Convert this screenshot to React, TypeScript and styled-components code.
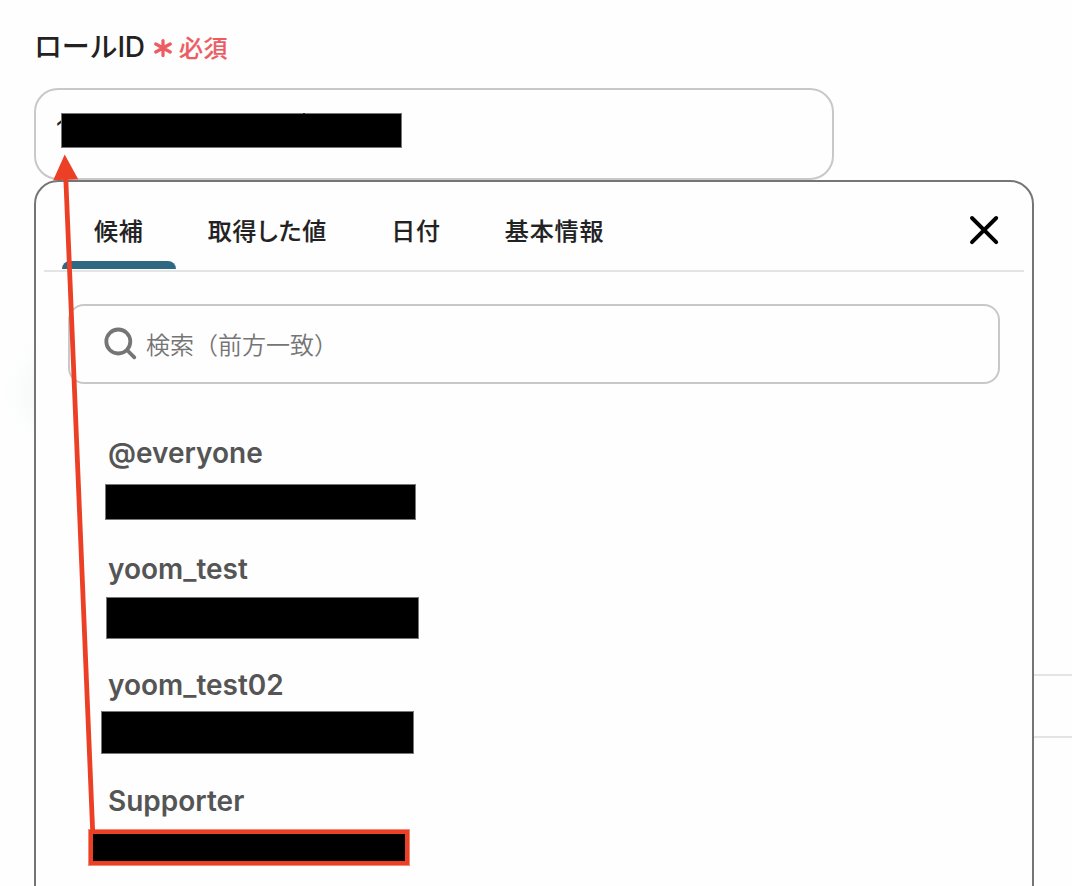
import React from 'react';
import styled, { createGlobalStyle } from 'styled-components';

const GlobalStyle = createGlobalStyle`
  * {
    box-sizing: border-box;
  }
  body {
    margin: 0;
    background: #fefefe;
    font-family: Inter, "Noto Sans CJK JP", sans-serif;
    color: #222;
  }
`;

const Page = styled.main`
  position: relative;
  height: 886px;
  padding: 27px 0 0 34px;
  overflow: hidden;
`;

const Label = styled.div`
  display: flex;
  align-items: center;
  height: 40px;
  margin-bottom: 21px;
  white-space: nowrap;
`;

const LabelText = styled.span`
  width: 119px;
  font: 500 28px/40px Inter, "Noto Sans CJK JP", sans-serif;
  letter-spacing: -0.2px;
`;

const Required = styled.span`
  display: flex;
  align-items: center;
  gap: 6px;
  color: #ec5c62;
  font: 500 24px/38px "Noto Sans CJK JP", sans-serif;
  letter-spacing: 0.5px;
  -webkit-text-stroke: 0.15px currentColor;
`;

const Field = styled.div`
  display: flex;
  align-items: flex-start;
  width: 800px;
  height: 92px;
  padding: 23px 20px;
  border: 2px solid #c8c8c8;
  border-radius: 24px;
  font-size: 27px;
  line-height: 35px;
`;

const FieldValue = styled.span`
  width: 5px;
  white-space: nowrap;
`;

const Mask = styled.div<{ $width: number; $height: number; $top?: number; $left?: number }>`
  position: relative;
  flex: none;
  width: ${({ $width }) => $width}px;
  height: ${({ $height }) => $height}px;
  margin-top: ${({ $top = 0 }) => $top}px;
  margin-left: ${({ $left = 0 }) => $left}px;
  border: 1px solid #777;
  background: #000;
`;

const OutlinedMask = styled(Mask)`
  border-color: #f28a78;
  box-shadow: inset 0 0 0 4px #ec4026;
`;

const Panel = styled.section`
  position: relative;
  width: 1000px;
  height: 760px;
  border: 2px solid #757575;
  border-radius: 24px;
  background: #fefefe;
`;

const PanelHeader = styled.div`
  display: flex;
  align-items: flex-start;
  justify-content: space-between;
  height: 90px;
  margin: 0 8px;
  padding: 0 23px 0 18px;
  border-bottom: 2px solid #e4e4e4;
`;

const Tabs = styled.nav`
  display: flex;
`;

const Tab = styled.button<{ $active?: boolean }>`
  display: flex;
  flex-direction: column;
  justify-content: space-between;
  height: 87px;
  padding: 0;
  border: 0;
  background: none;
  color: #222;
  font: 500 24px/36px "Noto Sans CJK JP", sans-serif;
  font-feature-settings: "palt";
  letter-spacing: 0.85px;
  white-space: nowrap;
  -webkit-text-stroke: 0.15px currentColor;

  span {
    padding: 30px 32px 0;
  }

  &::after {
    content: "";
    width: 100%;
    height: 8px;
    border-radius: 8px 8px 0 0;
    background: ${({ $active }) => ($active ? '#2e6881' : 'transparent')};
  }
`;

const CloseButton = styled.button`
  display: flex;
  margin-top: 31px;
  padding: 0;
  border: 0;
  background: none;
`;

const SearchBox = styled.div`
  display: flex;
  align-items: center;
  gap: 9px;
  height: 80px;
  margin: 32px 32px 43px;
  padding: 0 33px;
  border: 2px solid #c8c8c8;
  border-radius: 16px;
  color: #757575;
  font: 350 24px/36px "Noto Sans CJK JP", sans-serif;
`;

const Item = styled.div`
  height: 116px;
`;

const ItemName = styled.div`
  height: 52px;
  padding-left: 72px;
  color: #555;
  font-size: 28px;
  font-weight: 600;
  line-height: 52px;
`;

const Arrow = styled.svg`
  position: absolute;
  top: 0;
  left: 0;
  pointer-events: none;
`;

const Glow = styled.div`
  position: absolute;
  top: 322px;
  left: 0;
  width: 140px;
  height: 140px;
  border-radius: 50%;
  background: radial-gradient(closest-side, #f3f5f4 30%, #f8faf9 55%, #fcfdfd 80%, #fefefe 100%);
`;

const BackgroundRow = styled.div`
  position: absolute;
  top: 674px;
  left: 1000px;
  width: 100px;
  height: 64px;
  border: solid #e4e4e4;
  border-width: 2px 0;
`;

const Tick = styled.i`
  position: absolute;
  top: -1px;
  left: 241px;
  width: 2px;
  height: 1px;
  background: #222;
`;

const tabs = ['候補', '取得した値', '日付', '基本情報'];

const roles = [
  { name: '@everyone', width: 311, height: 36, top: 5, left: 69 },
  { name: 'yoom_test', width: 313, height: 42, top: 2, left: 70 },
  { name: 'yoom_test02', width: 313, height: 43, top: 0, left: 65 },
  { name: 'Supporter', width: 322, height: 37, top: 2, left: 52, outlined: true },
];

const App = () => (
  <>
    <GlobalStyle />
    <Page>
      <Glow />
      <BackgroundRow />
      <Label>
        <LabelText>ロールID</LabelText>
        <Required>
          <svg width="20" height="20" viewBox="0 0 20 20" fill="none" stroke="currentColor" strokeWidth="3.2" strokeLinecap="round">
            <path d="M10 3.5v15M2.8 7l14.4 8M17.2 7L2.8 15" />
          </svg>
          必須
        </Required>
      </Label>
      <Field>
        <FieldValue>1</FieldValue>
        <Mask $width={341} $height={35}>
          <Tick />
        </Mask>
      </Field>
      <Panel>
        <PanelHeader>
          <Tabs>
            {tabs.map((tab, i) => (
              <Tab key={tab} $active={i === 0}>
                <span>{tab}</span>
              </Tab>
            ))}
          </Tabs>
          <CloseButton aria-label="close">
            <svg width="34" height="34" viewBox="0 0 34 34" fill="none" stroke="#000" strokeWidth="3.9" strokeLinecap="round">
              <path d="M5 5l24.2 24.2M29.2 5L5 29.2" />
            </svg>
          </CloseButton>
        </PanelHeader>
        <SearchBox>
          <svg width="34" height="34" viewBox="0 0 34 34" fill="none" stroke="currentColor" strokeWidth="3.8" strokeLinecap="round">
            <circle cx="15.3" cy="14.5" r="12" />
            <path d="M24 23l7.3 7.3" />
          </svg>
          検索（前方一致）
        </SearchBox>
        {roles.map(({ name, width, height, top, left, outlined }) => {
          const RoleMask = outlined ? OutlinedMask : Mask;
          return (
            <Item key={name}>
              <ItemName>{name}</ItemName>
              <RoleMask $width={width} $height={height} $top={top} $left={left} />
            </Item>
          );
        })}
      </Panel>
      <Arrow width="1072" height="886">
        <path d="M65.7 176L92.7 832" stroke="#ec4026" strokeWidth="4.8" />
        <path d="M64.7 154.5L78.2 179.3L53.2 180.3Z" fill="#ec4026" />
      </Arrow>
    </Page>
  </>
);

export default App;
